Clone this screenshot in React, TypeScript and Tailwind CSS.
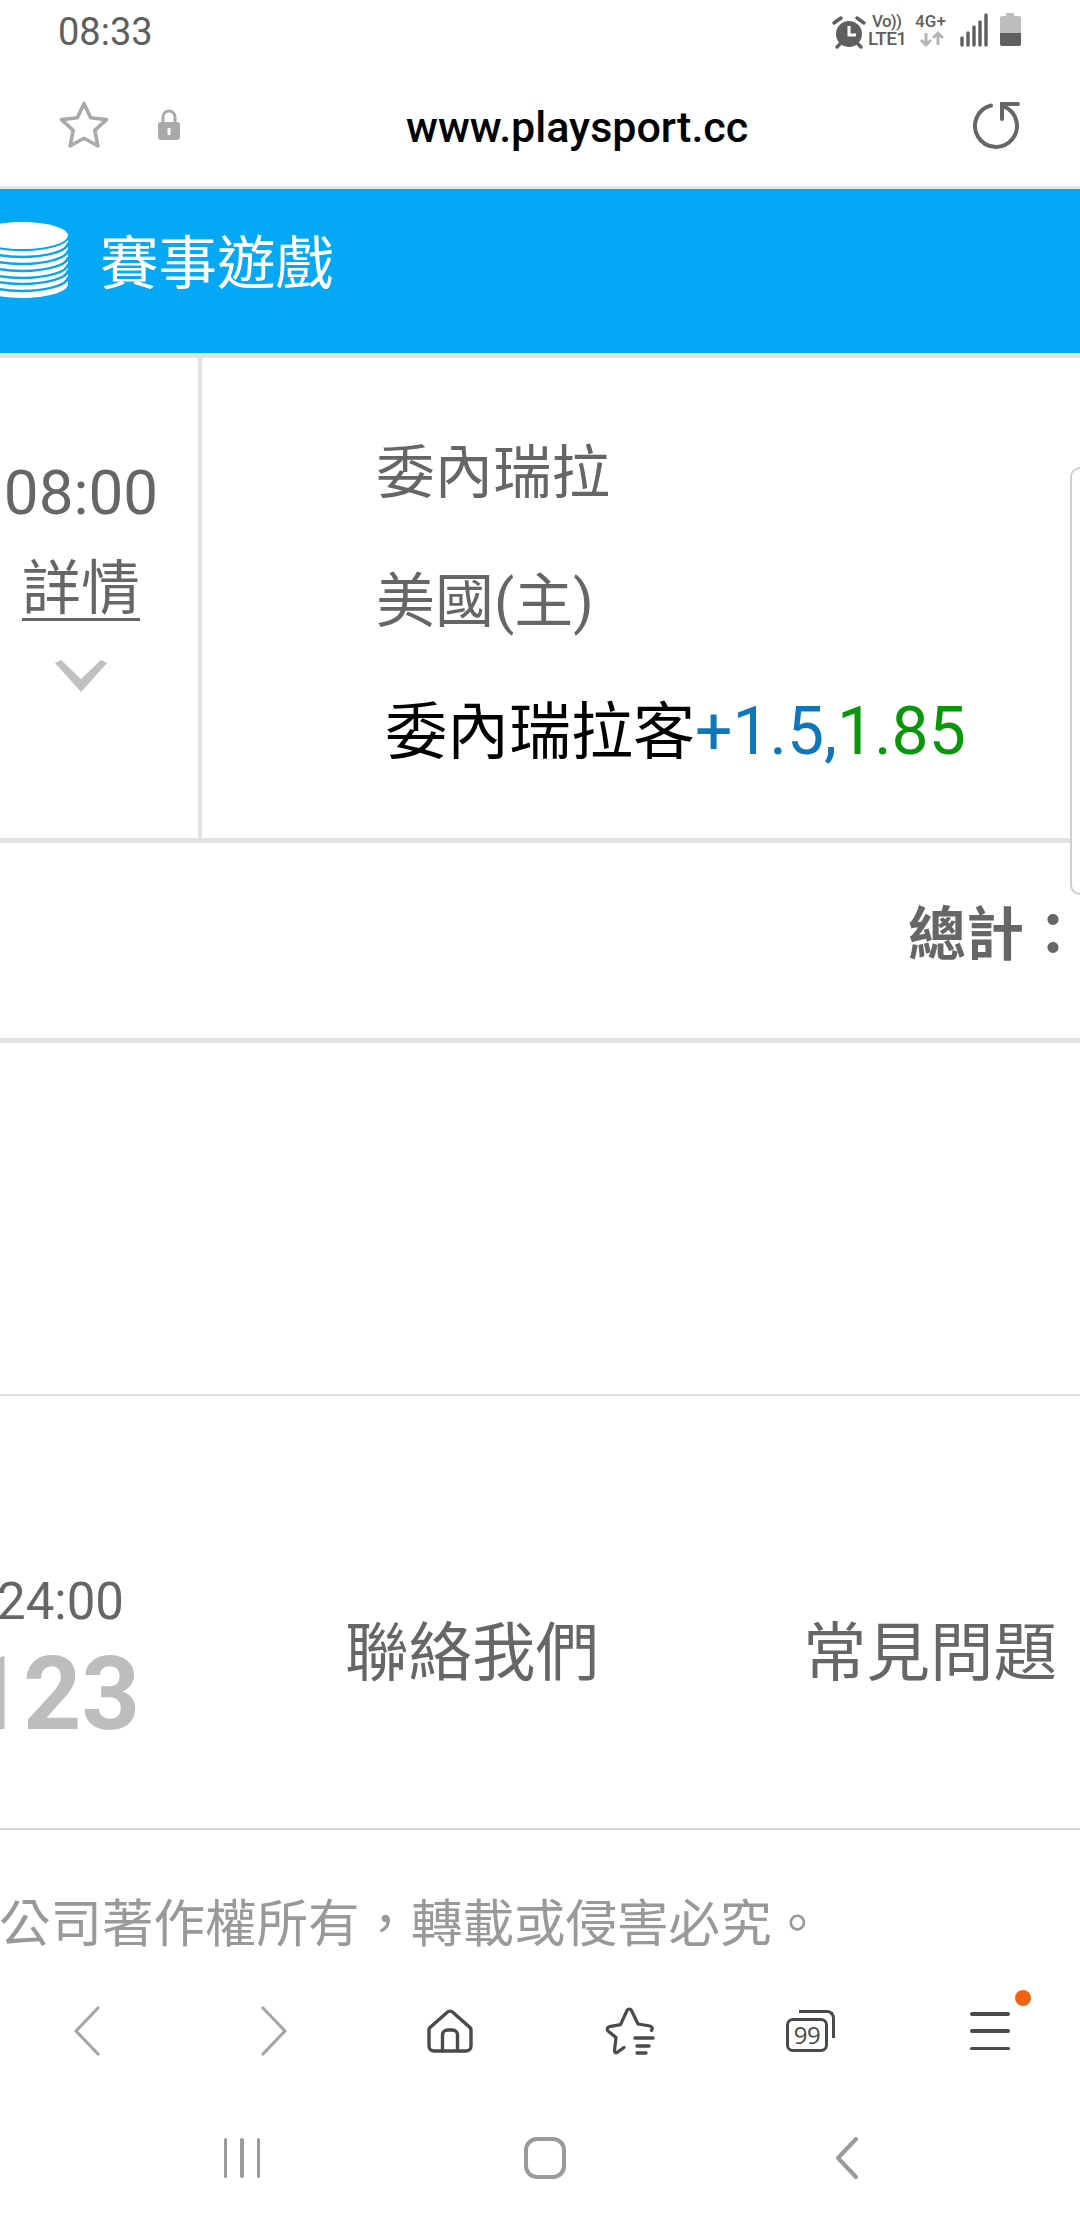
import React from 'react';

const font = "font-['Roboto','Noto_Sans_CJK_TC',sans-serif]";

const StatusIcons = () => (
    <svg width="200" height="40" viewBox="0 0 200 40" fill="none">
        {/* alarm */}
        <circle cx="20" cy="22" r="13" fill="#5f5f5f" />
        <path d="M20 14v9h7" stroke="#fff" strokeWidth="3" />
        <path d="M5 11l7-5M35 11l-7-5M8 35l4-4M32 35l-4-4" stroke="#5f5f5f" strokeWidth="3.5" strokeLinecap="round" />
        <text x="43" y="15" fontSize="17" fontWeight="500" fill="#5f5f5f" fontFamily="Roboto" textLength="30">Vo))</text>
        <text x="39" y="33" fontSize="19" fontWeight="500" fill="#5f5f5f" fontFamily="Roboto" textLength="39">LTE1</text>
        <text x="86" y="15" fontSize="17" fontWeight="500" fill="#5f5f5f" fontFamily="Roboto" textLength="31">4G+</text>
        <path d="M97 21v12M92 28l5 5 5-5" stroke="#b5b5b5" strokeWidth="3" />
        <path d="M109 33V21M104 26l5-5 5 5" stroke="#b5b5b5" strokeWidth="3" />
        {/* signal */}
        <path d="M133 26v7M139 21v12M145 15v18M151 10v23M157 3v30" stroke="#5f5f5f" strokeWidth="3.4" strokeLinecap="round" />
        {/* battery */}
        <path d="M177 1h8v3h5a2 2 0 0 1 2 2v15h-21V6a2 2 0 0 1 2-2h4z" fill="#bdbdbd" />
        <path d="M171 21h21v11a2 2 0 0 1-2 2h-17a2 2 0 0 1-2-2z" fill="#5f5f5f" />
    </svg>
);

const UrlBar = () => (
    <div className="flex items-center h-[122px] relative">
        <svg className="ml-[59px]" width="50" height="48" viewBox="0 0 50 48" fill="none">
            <path d="M25 2.5l6.6 14.2 15.9 1.9-11.7 10.7 3.1 15.6L25 37.2l-13.9 7.7 3.1-15.6L2.500 18.600l15.900-1.900z" stroke="#a9a9a9" strokeWidth="3.6" strokeLinejoin="round" />
        </svg>
        <svg className="ml-[48px]" width="24" height="32" viewBox="0 0 24 32">
            <path d="M6 15V8a6 6 0 0 1 12 0v7" fill="none" stroke="#a9a9a9" strokeWidth="3" />
            <rect x="1" y="13" width="22" height="18" rx="3" fill="#a9a9a9" />
            <path d="M10.5 19h3v7h-3z" fill="#fff" />
        </svg>
        <span className="ml-[225px] mt-[5px] text-[43px] font-medium text-black">www.playsport.cc</span>
        <svg className="ml-auto mr-[60px]" width="48" height="48" viewBox="0 0 48 48" fill="none">
            <path d="M19 4.5a21 21 0 1 0 13 1" stroke="#666" strokeWidth="4" strokeLinecap="round" />
            <path d="M46 3H30v15" stroke="#666" strokeWidth="4" strokeLinecap="round" />
        </svg>
    </div>
);

const Coins = () => (
    <svg className="-mt-[8px]" width="68" height="76" viewBox="0 0 68 76">
        <path d="M-24 14v48c0 7.700 20.600 14 46 14s46-6.300 46-14V14z" fill="#fff" />
        <path d="M-24 14c0 7.700 20.600 14 46 14s46-6.300 46-14M-24 21c0 7.700 20.600 14 46 14s46-6.300 46-14M-24 28c0 7.700 20.600 14 46 14s46-6.300 46-14M-24 35c0 7.700 20.600 14 46 14s46-6.300 46-14M-24 42c0 7.700 20.600 14 46 14s46-6.300 46-14M-24 48c0 7.700 20.600 14 46 14s46-6.300 46-14M-24 55c0 7.700 20.600 14 46 14s46-6.300 46-14" fill="none" stroke="#0aa5ea" strokeWidth="2.400" />
        <ellipse cx="22" cy="13.500" rx="46" ry="13.500" fill="#fff" />
    </svg>
);

const BrowserNav = () => (
    <div className="grid grid-cols-6 w-[1080px] h-[110px] items-center">
        <svg className="justify-self-center -ml-[6px]" width="28" height="50" viewBox="0 0 28 50" fill="none">
            <path d="M25 2L3 25l22 23" stroke="#a6a6a6" strokeWidth="3.2" strokeLinecap="round" strokeLinejoin="round" />
        </svg>
        <svg className="justify-self-center ml-[8px]" width="28" height="50" viewBox="0 0 28 50" fill="none">
            <path d="M3 2l22 23L3 48" stroke="#a6a6a6" strokeWidth="3.2" strokeLinecap="round" strokeLinejoin="round" />
        </svg>
        <svg className="justify-self-center" width="46" height="44" viewBox="0 0 46 44" fill="none">
            <path d="M3 18.5L20 3.5a4 4 0 0 1 6 0l17 15a4 4 0 0 1 1 3V37a5 5 0 0 1-5 5H7a5 5 0 0 1-5-5V21.5a4 4 0 0 1 1-3z" stroke="#4a4a4a" strokeWidth="3.4" strokeLinejoin="round" />
            <path d="M15.5 42V26a5 5 0 0 1 5-5h5a5 5 0 0 1 5 5v16" stroke="#4a4a4a" strokeWidth="3.4" />
        </svg>
        <svg className="justify-self-center" width="50" height="48" viewBox="0 0 50 48" fill="none">
            <path d="M19 40.500L12 45.500c-1.500.8-2.600-.3-2.400-2.300L11 30.500 3 24c-1.500-2-.5-4 1.500-4.400l11-2L22 3.500c1-2 3.500-2 4.500 0l6.500 13.500 12 2c2 .4 3 2.500 1.500 4.500" stroke="#4a4a4a" strokeWidth="3.2" strokeLinecap="round" strokeLinejoin="round" />
            <path d="M30 31h18M32 39h12M32 46h9" stroke="#4a4a4a" strokeWidth="3.4" strokeLinecap="round" />
        </svg>
        <div className="justify-self-center relative w-[50px] h-[42px] ml-[2px]">
            <div className="absolute left-[13px] top-0 w-[36px] h-[28px] border-t-[3px] border-r-[3px] border-[#4a4a4a] rounded-tr-[8px]" />
            <div className="absolute left-0 top-[8px] w-[42px] h-[34px] border-[3px] border-[#4a4a4a] rounded-[7px] bg-white flex items-center justify-center">
                <span className="text-[24px] leading-none text-[#4a4a4a] font-['Open_Sans',sans-serif] tracking-[-0.5px]">99</span>
            </div>
        </div>
        <div className="justify-self-center relative w-[40px] h-[38px] flex flex-col justify-between">
            <div className="h-[3.500px] rounded-full bg-[#4a4a4a]" />
            <div className="h-[3.500px] rounded-full bg-[#4a4a4a]" />
            <div className="h-[3.500px] rounded-full bg-[#4a4a4a]" />
            <div className="absolute -top-[22px] left-[45px] w-[16px] h-[16px] rounded-full bg-[#f26318]" />
        </div>
    </div>
);

const SystemNav = () => (
    <div className="grid grid-cols-3 w-[906px] ml-[91px] h-[134px] pt-[14px] items-center">
        <div className="justify-self-center flex gap-[13px] h-[40px] -mt-[4px]">
            <div className="w-[3.500px] rounded-full bg-[#9a9a9a]" />
            <div className="w-[3.500px] rounded-full bg-[#9a9a9a]" />
            <div className="w-[3.500px] rounded-full bg-[#9a9a9a]" />
        </div>
        <div className="justify-self-center w-[42px] h-[42px] -mt-[4px] ml-[2px] rounded-[13px] border-[4px] border-[#9a9a9a]" />
        <svg className="justify-self-center -mt-[4px] ml-[2px]" width="26" height="42" viewBox="0 0 26 42" fill="none">
            <path d="M22 2L4 21l18 19" stroke="#9a9a9a" strokeWidth="4" strokeLinecap="round" strokeLinejoin="round" />
        </svg>
    </div>
);

const App: React.FC = () => (
    <div className={`${font} relative w-[1080px] h-[2220px] overflow-hidden bg-white text-[#666]`}>
        <div className="flex items-center justify-between h-[64px] pl-[58px] pr-[51px]">
            <span className="text-[38px] leading-none text-[#5f5f5f]">08:33</span>
            <StatusIcons />
        </div>
        <UrlBar />

        <div className="h-[167px] pb-[14px] border-t-[3px] border-[#dfeaf0] bg-[#04a8f4] flex items-center">
            <Coins />
            <span className="ml-[32px] text-[58.500px] leading-none text-white">賽事遊戲</span>
        </div>

        <div className="flex h-[490px] border-y-[5px] border-[#e2e2e2]">
            <div className="-ml-[36px] w-[238px] shrink-0 border-r-[4px] border-[#e2e2e2] flex flex-col items-center pt-[104px]">
                <span className="text-[62px] leading-none">08:00</span>
                <span className="mt-[35px] text-[59px] leading-none underline underline-offset-[9px] decoration-[3px]">詳情</span>
                <svg className="mt-[42px]" width="52" height="32" viewBox="0 0 52 32">
                    <path d="M0 3l6-3 20 19L46 0l6 3-26 29z" fill="#c0c0c0" />
                </svg>
            </div>
            <div className="flex-1 flex flex-col pl-[174px] pt-[86px]">
                <span className="text-[58.500px] leading-none">委內瑞拉</span>
                <span className="mt-[69px] text-[59px] leading-none">美國(主)</span>
                <div className="mt-[68px] ml-[9px] text-[62px] leading-none text-black whitespace-nowrap">
                    委內瑞拉客
                    <span className="text-[66px] text-[#0f76ba]">+1.5,</span>
                    <span className="text-[66px] text-[#0a960a]">1.85</span>
                </div>
            </div>
        </div>

        <div className="h-[200px] border-b-[5px] border-[#e2e2e2] flex justify-end pt-[63px] -mr-[2px]">
            <span className="text-[58px] leading-none font-bold">總計：</span>
        </div>

        <div className="h-[353px] border-b-[2px] border-[#e0e0e0]" />

        <div className="h-[434px] border-b-[2px] border-[#d8d8d8] flex">
            <div className="w-[140px] flex flex-col items-end pt-[180px]">
                <span className="text-[51px] leading-none whitespace-nowrap mr-[16px]">24:00</span>
                <span className="mt-[16px] text-[102px] leading-none font-bold text-[#bdbdbd] whitespace-nowrap">123</span>
            </div>
            <span className="ml-[205px] mt-[226px] text-[63.500px] leading-none whitespace-nowrap">聯絡我們</span>
            <span className="ml-[204px] mt-[226px] text-[63.500px] leading-none whitespace-nowrap">常見問題</span>
        </div>

        <div className="h-[146px] pt-[69px] -ml-[1px] text-[51.500px] leading-none text-[#999] whitespace-nowrap">
            公司著作權所有，轉載或侵害必究。
        </div>

        <BrowserNav />
        <SystemNav />

        {/* side panel handle */}
        <div className="absolute right-0 top-[467px] w-[10px] h-[428px] rounded-l-[10px] border-l-[2px] border-y-[2px] border-[#cfcfcf] bg-white" />
    </div>
);

export default App;
